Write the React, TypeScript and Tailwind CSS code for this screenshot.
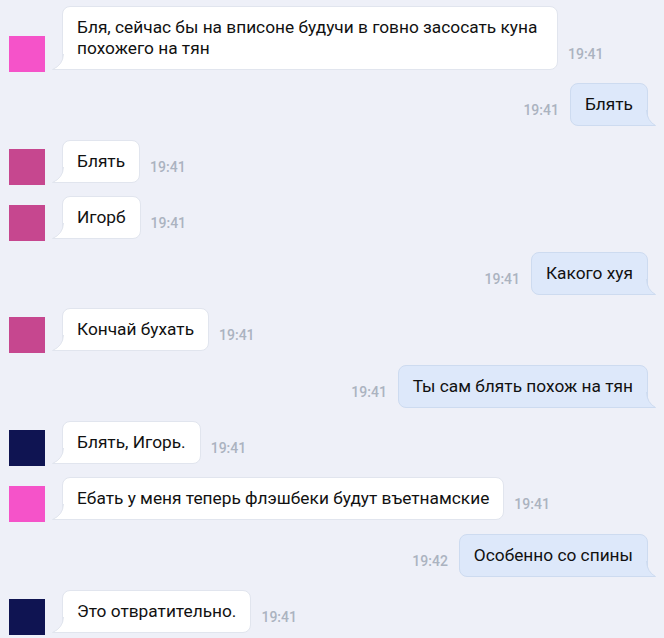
import React from "react";

type Msg = {
  text: string;
  time: string;
  out?: boolean;
  avatar?: string;
};

const messages: Msg[] = [
  { text: "Бля, сейчас бы на вписоне будучи в говно засосать куна похожего на тян", time: "19:41", avatar: "bg-[#f553c9]" },
  { text: "Блять", time: "19:41", out: true },
  { text: "Блять", time: "19:41", avatar: "bg-[#c6478f]" },
  { text: "Игорб", time: "19:41", avatar: "bg-[#c6478f]" },
  { text: "Какого хуя", time: "19:41", out: true },
  { text: "Кончай бухать", time: "19:41", avatar: "bg-[#c6478f]" },
  { text: "Ты сам блять похож на тян", time: "19:41", out: true },
  { text: "Блять, Игорь.", time: "19:41", avatar: "bg-[#0f1452]" },
  { text: "Ебать у меня теперь флэшбеки будут въетнамские", time: "19:41", avatar: "bg-[#f553c9]" },
  { text: "Особенно со спины", time: "19:42", out: true },
  { text: "Это отвратительно.", time: "19:41", avatar: "bg-[#0f1452]" },
];

const Tail = ({ out }: { out?: boolean }) =>
  out ? (
    <svg
      className="absolute -right-[9px] bottom-[-1px]"
      width="10"
      height="16"
      viewBox="0 0 10 16"
    >
      <path d="M0 0 Q1 11 9.5 15.5 L0 15.5 Z" fill="#dde8fa" />
      <path d="M0.5 0 Q1 11 9.5 15.5 L0 15.5" fill="none" stroke="#cddbf0" strokeWidth="1" />
    </svg>
  ) : (
    <svg
      className="absolute -left-[11px] bottom-[-1px]"
      width="12"
      height="16"
      viewBox="0 0 12 16"
    >
      <path d="M12 0 Q11 11 0.5 15.5 L12 15.5 Z" fill="#ffffff" />
      <path d="M11.5 0 Q11 11 0.5 15.5 L12 15.5" fill="none" stroke="#e1e5ee" strokeWidth="1" />
    </svg>
  );

const Time = ({ t }: { t: string }) => (
  <span className="mb-[8px] shrink-0 text-[14px] leading-[16px] font-medium text-[#abb3c0]">{t}</span>
);

const Row = ({ m }: { m: Msg }) => {
  if (m.out) {
    return (
      <div className="flex items-end justify-end gap-[11px] pr-[16px]">
        <Time t={m.time} />
        <div className="relative rounded-[8px] rounded-br-none border border-[#cddbf0] bg-[#dde8fa] px-[14px] py-[10px] text-[17.3px] leading-[21px] text-[#111]">
          {m.text}
          <Tail out />
        </div>
      </div>
    );
  }
  return (
    <div className="flex items-end pl-[9px]">
      <div className={`-mb-[2px] h-[36px] w-[36px] shrink-0 ${m.avatar}`} />
      <div className="ml-[17px] flex items-end gap-[10px]">
        <div className="relative max-w-[496px] rounded-[8px] rounded-bl-none border border-[#e1e5ee] bg-white px-[14px] py-[10px] text-[17.3px] leading-[21px] text-[#111]">
          {m.text}
          <Tail />
        </div>
        <Time t={m.time} />
      </div>
    </div>
  );
};

export default function App() {
  return (
    <div className="min-h-[638px] w-[664px] bg-[#eef0f8] pt-[6px] font-['Roboto','Noto_Sans',sans-serif]">
      <div className="flex flex-col gap-[13.3px]">
        {messages.map((m, i) => (
          <Row key={i} m={m} />
        ))}
      </div>
    </div>
  );
}
